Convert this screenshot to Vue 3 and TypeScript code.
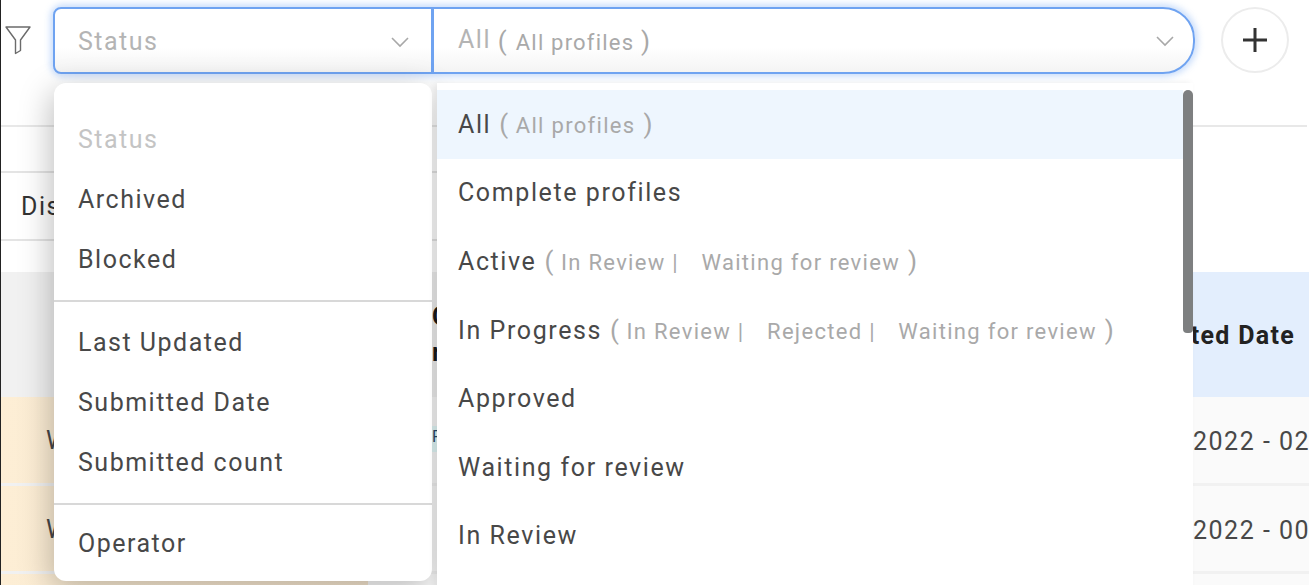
<script setup lang="ts">
const statusGroups: string[][] = [
  ['Archived', 'Blocked'],
  ['Last Updated', 'Submitted Date', 'Submitted count'],
  ['Operator'],
]
interface Profile { label: string; subs: string[] }
const profiles: Profile[] = [
  { label: 'All', subs: ['All profiles'] },
  { label: 'Complete profiles', subs: [] },
  { label: 'Active', subs: ['In Review |', 'Waiting for review'] },
  { label: 'In Progress', subs: ['In Review |', 'Rejected |', 'Waiting for review'] },
  { label: 'Approved', subs: [] },
  { label: 'Waiting for review', subs: [] },
  { label: 'In Review', subs: [] },
]
const rows = ['2022 - 02', '2022 - 00']
</script>

<template>
  <div class="page">
    <header class="toolbar">
      <svg class="funnel" width="26" height="30" viewBox="0 0 26 30" fill="none" stroke="#6b6b6b" stroke-width="1.4">
        <path d="M1 2h24L15.5 15v10.500l-5 3V15z" stroke-linejoin="round" />
      </svg>
      <div class="select">
        <div class="field field-left">
          <span class="placeholder">Status</span>
          <svg class="chev" width="20" height="12" viewBox="0 0 20 12" fill="none" stroke="#a8a8a8" stroke-width="1.6"><path d="M2 2l8 8 8-8" /></svg>
        </div>
        <div class="field field-right">
          <span class="placeholder"><span class="all">All</span> <span class="paren">(</span> <span class="sub">All profiles</span> <span class="paren">)</span></span>
          <svg class="chev" width="20" height="12" viewBox="0 0 20 12" fill="none" stroke="#a8a8a8" stroke-width="1.6"><path d="M2 2l8 8 8-8" /></svg>
        </div>
      </div>
      <button class="add" type="button" aria-label="Add">
        <svg width="26" height="26" viewBox="0 0 26 26" stroke="#333" stroke-width="3"><path d="M13 1v24M1 13h24" /></svg>
      </button>
    </header>

    <div class="tabs"><span>Display</span></div>

    <section class="table">
      <div class="thead">
        <div class="th-gray"></div>
        <div class="th-mid"><b>Completed<br />requests</b></div>
        <div class="th-blue"><b>Submitted Date</b></div>
      </div>
      <div v-for="(r, i) in rows" :key="r" class="tr">
        <div class="td-status">Waiting</div>
        <div class="td-mid"><span v-if="i === 0" class="tag">F</span></div>
        <div class="td-date">{{ r }}</div>
      </div>
      <div class="tr tr-last">
        <div class="td-status"></div>
      </div>
    </section>

    <div class="menu menu-status">
      <div class="opt muted">Status</div>
      <template v-for="(g, i) in statusGroups" :key="i">
        <hr v-if="i > 0" class="sep" />
        <div v-for="o in g" :key="o" class="opt">{{ o }}</div>
      </template>
    </div>

    <div class="menu menu-profile">
      <div class="list">
        <div v-for="(p, i) in profiles" :key="p.label" class="popt" :class="{ active: i === 0 }">
          <span>{{ p.label }}</span>
          <template v-if="p.subs.length">
            <span class="paren">(</span>
            <span v-for="s in p.subs" :key="s" class="sub">{{ s }}</span>
            <span class="paren">)</span>
          </template>
        </div>
      </div>
      <div class="scrollbar"></div>
    </div>
  </div>
</template>

<style>
html, body { margin: 0; background: #fff; }
</style>

<style scoped>
.page {
  position: relative;
  width: 1309px;
  height: 585px;
  overflow: hidden;
  box-sizing: border-box;
  border-left: 1px solid #222;
  background: #fff;
  font-family: Roboto, "Liberation Sans", sans-serif;
  font-size: 25px;
  letter-spacing: 1.5px;
  color: #484848;
}
.toolbar {
  height: 127px;
  box-sizing: border-box;
  border-bottom: 2px solid #e8e8e8;
  margin-right: 2px;
  display: flex;
  align-items: flex-start;
  padding: 7px 0 0 4px;
}
.funnel { margin: 18px 22px 0 0; }
.select {
  display: flex;
  height: 67px;
  width: 1142px;
  box-shadow: 0 0 6px 3px rgba(120, 170, 245, .38);
  border-radius: 10px 32px 32px 10px;
  position: relative;
}
.field {
  box-sizing: border-box;
  display: flex;
  align-items: center;
  justify-content: space-between;
  border: 2px solid #6fa3f1;
  background: linear-gradient(#fff 60%, #f4f4f4);
}
.field-left { width: 379px; padding: 2px 21px 0 23px; border-radius: 8px 0 0 8px; border-right-width: 1px; }
.field-right { flex: 1; padding: 0 18px 0 24px; border-radius: 0 32px 32px 0; border-left-width: 2px; }
.placeholder { color: #b4b4b4; }
.all { position: relative; top: -2px; }
.add {
  width: 68px;
  height: 66px;
  margin-left: 26px;
  box-sizing: border-box;
  border: 2px solid #ececec;
  border-radius: 50%;
  background: #fff;
  padding: 0;
  display: flex;
  align-items: center;
  justify-content: center;
}
.tabs {
  margin-top: 44px;
  width: 1190px;
  height: 70px;
  box-sizing: border-box;
  border-top: 2px solid #e4e4e4;
  border-bottom: 2px solid #e4e4e4;
  padding-left: 20px;
  display: flex;
  align-items: center;
  color: #333;
}
.table { margin-top: 31px; }
.thead {
  height: 125px;
  display: grid;
  grid-template-columns: 420px 680px 208px;
}
.th-gray, .th-mid { background: #f1f1f1; }
.th-mid {
  padding: 27px 0 0 11px;
  line-height: 36px;
  color: #1a1a1a;
  white-space: nowrap;
  overflow: hidden;
}
.th-blue {
  background: #e3eefd;
  display: flex;
  align-items: center;
  justify-content: flex-end;
  padding: 2px 14px 0 0;
  letter-spacing: 1.3px;
  color: #222;
  white-space: nowrap;
}
.tr {
  height: 88.5px;
  display: grid;
  grid-template-columns: 367px 1fr 116px;
  border-bottom: 3px solid #f1f1f1;
  box-sizing: border-box;
  background: #fafafa;
}
.td-status {
  background: linear-gradient(90deg, #fdeed5, #f6e6cf);
  padding: 29px 0 0 45px;
}
.td-mid { padding: 29px 0 0 64px; }
.tag {
  display: inline-block;
  width: 14px;
  height: 26px;
  line-height: 22px;
  font-size: 16px;
  color: #2a4a6a;
  background: #e4fafa;
  overflow: hidden;
}
.td-date { padding-top: 30px; white-space: nowrap; overflow: hidden; }
.menu {
  position: absolute;
  top: 83px;
  background: #fff;
}
.menu-status {
  left: 53px;
  width: 378px;
  height: 498px;
  box-sizing: border-box;
  border-radius: 12px;
  padding-top: 27px;
  box-shadow: -3px 8px 32px rgba(0, 0, 0, .26);
}
.opt {
  height: 60px;
  line-height: 60px;
  padding-left: 24px;
}
.muted { color: #c4c4c4; }
.sep { margin: 10px 0 11px; border: 0; border-top: 2px solid #d8d8d8; }
.sep + .opt:last-child { margin-top: -2px; }
.menu-profile {
  left: 436px;
  width: 756px;
  height: 520px;
  border-radius: 0 0 12px 12px;
  padding-top: 7px;
  box-sizing: border-box;
  display: flex;
  align-items: flex-start;
  box-shadow: -3px 0 6px rgba(0, 0, 0, .08);
}
.list { flex: 1; }
.popt {
  height: 68.6px;
  display: flex;
  align-items: center;
  padding-left: 21px;
  white-space: nowrap;
  letter-spacing: 1.6px;
}
.popt.active { background: #eef6fe; }
.paren { color: #a8a8a8; margin-left: 8px; font-size: 26px; }
.placeholder .paren { margin-left: -1px; }
.sub { color: #a9a9a9; font-size: 22px; margin: 2px 0 0 6px; letter-spacing: 1.3px; }
.sub + .sub { margin-left: 22.500px; }
.placeholder .sub { margin: 0; letter-spacing: 1.2px; }
.scrollbar {
  width: 10px;
  height: 243px;
  background: #7d7f80;
  border-radius: 5px 5px 4px 4px;
}
</style>
